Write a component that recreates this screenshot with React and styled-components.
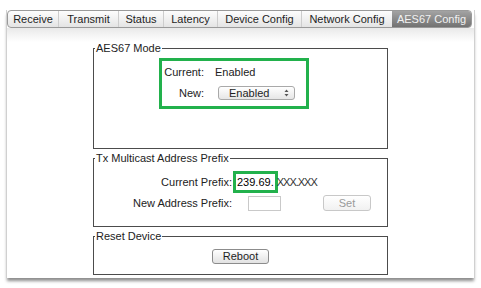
import React from 'react';
import styled, { createGlobalStyle } from 'styled-components';

const Global = createGlobalStyle`
  html, body { margin: 0; padding: 0; background: #fff; }
  body {
    font-family: "Liberation Sans", Arial, sans-serif;
    font-size: 11px;
    color: #222;
  }
`;

const Page = styled.div`
  width: 481px;
  height: 288px;
  box-sizing: border-box;
  padding: 10px 6px 0 6px;
`;

const Frame = styled.div`
  height: 268px;
  box-sizing: border-box;
  border-left: 1px solid #d0d0d0;
  border-right: 1px solid #d0d0d0;
  background: #fff;
  box-shadow: 0 4px 3px -1px rgba(0, 0, 0, 0.45);
  display: flex;
  flex-direction: column;
`;

const TabBar = styled.div`
  display: flex;
  height: 18px;
  box-sizing: border-box;
  margin-right: 2px;
  border: 1px solid #9a9a9a;
  border-radius: 4px;
  background: linear-gradient(#fdfdfd, #e4e4e4);
  overflow: hidden;
`;

const Tab = styled.div`
  width: ${(p) => p.$w}px;
  box-sizing: border-box;
  text-align: center;
  line-height: 16px;
  font-size: 11px;
  white-space: nowrap;
  color: ${(p) => (p.$active ? '#f2f2f2' : '#1e1e1e')};
  border-left: ${(p) => (p.$first || p.$active ? 'none' : '1px solid #cdcdcd')};
  background: ${(p) => (p.$active ? 'linear-gradient(#a3a3a3, #727272)' : 'transparent')};
`;

const Body = styled.div`
  flex: 1;
  display: flex;
  flex-direction: column;
  align-items: center;
  gap: 3px;
  padding-top: 14px;
  background: linear-gradient(#e9e9e9, #fff 14px);
`;

const Group = styled.fieldset`
  width: 295px;
  box-sizing: border-box;
  margin: 0;
  padding: 0;
  min-width: 0;
  border: 1px solid #4c4c4c;
`;

const Legend = styled.legend`
  margin-left: 1px;
  padding: 0 1px;
  line-height: 12px;
  font-size: 11px;
  color: #222;
`;

const GroupBody = styled.div`
  height: ${(p) => p.$h}px;
  box-sizing: border-box;
  padding-top: 7px;
  display: flex;
  flex-direction: column;
  align-items: ${(p) => (p.$center ? 'center' : 'stretch')};
`;

const ModeBox = styled.div`
  margin: -3px 0 0 65px;
  width: 150px;
  height: 51px;
  box-sizing: border-box;
  border: 3px solid #22b14c;
  padding: 4px 0 0 5px;
  display: grid;
  grid-template-columns: 37px auto;
  grid-template-rows: 14px 14px;
  column-gap: 11px;
  row-gap: 7px;
  align-items: center;
`;

const Label = styled.span`
  justify-self: end;
  white-space: nowrap;
  color: #222;
`;

const Value = styled.span`
  color: #222;
`;

const Select = styled.div`
  margin-left: 3px;
  width: 77px;
  height: 14px;
  box-sizing: border-box;
  border: 1px solid #a9a9a9;
  border-radius: 3px;
  background: linear-gradient(#ffffff, #e6e6e6);
  display: flex;
  align-items: center;
  justify-content: space-between;
  padding: 0 5px 0 10px;
  line-height: 12px;
  color: #1e1e1e;
`;

const PrefixGrid = styled.div`
  display: grid;
  grid-template-columns: 138px auto;
  grid-template-rows: 22px 16px;
  column-gap: 1px;
  row-gap: 2px;
  align-items: center;
`;

const ValueRow = styled.div`
  display: flex;
  align-items: center;
`;

const Mark = styled.span`
  height: 22px;
  box-sizing: border-box;
  border: 3px solid #22b14c;
  padding: 0 1px;
  line-height: 16px;
  color: #000;
  font-size: 11px;
`;

const Rest = styled.span`
  color: #333;
  letter-spacing: -1px;
  margin-left: -1px;
`;

const TextInput = styled.div`
  margin-left: 15px;
  width: 33px;
  height: 15px;
  box-sizing: border-box;
  border: 1px solid #c9c9c9;
  background: #fff;
`;

const Button = styled.div`
  margin-left: ${(p) => p.$ml || 0}px;
  width: ${(p) => p.$w}px;
  height: ${(p) => p.$h}px;
  box-sizing: border-box;
  border: 1px solid ${(p) => (p.$disabled ? '#c8c8c8' : '#8c8c8c')};
  border-radius: 3px;
  background: ${(p) => (p.$disabled ? 'linear-gradient(#ffffff, #f1f1f1)' : 'linear-gradient(#ffffff, #e2e2e2)')};
  color: ${(p) => (p.$disabled ? '#9a9a9a' : '#1e1e1e')};
  text-align: center;
  line-height: ${(p) => p.$h - 2}px;
`;

const tabs = [
  ['Receive', 50],
  ['Transmit', 60],
  ['Status', 45],
  ['Latency', 54],
  ['Device Config', 84],
  ['Network Config', 91],
  ['AES67 Config', 79],
];

const Arrows = () => (
  <svg width="5" height="8" viewBox="0 0 5 8">
    <path d="M2.5 0.5 L4.5 3 L0.5 3 Z" fill="#555" />
    <path d="M2.5 7.5 L4.5 5 L0.5 5 Z" fill="#555" />
  </svg>
);

export default function App() {
  return (
    <>
      <Global />
      <Page>
        <Frame>
          <TabBar>
            {tabs.map(([t, w], i) => (
              <Tab key={t} $w={w} $first={i === 0} $active={i === tabs.length - 1}>
                {t}
              </Tab>
            ))}
          </TabBar>
          <Body>
            <Group>
              <Legend>AES67 Mode</Legend>
              <GroupBody $h={94}>
                <ModeBox>
                  <Label>Current:</Label>
                  <Value>Enabled</Value>
                  <Label>New:</Label>
                  <Select>
                    <span>Enabled</span>
                    <Arrows />
                  </Select>
                </ModeBox>
              </GroupBody>
            </Group>
            <Group>
              <Legend>Tx Multicast Address Prefix</Legend>
              <GroupBody $h={62}>
                <PrefixGrid>
                  <Label>Current Prefix:</Label>
                  <ValueRow>
                    <Mark>239.69.</Mark>
                    <Rest>XXX.XXX</Rest>
                  </ValueRow>
                  <Label>New Address Prefix:</Label>
                  <ValueRow>
                    <TextInput />
                    <Button $disabled $ml={42} $w={48} $h={16}>Set</Button>
                  </ValueRow>
                </PrefixGrid>
              </GroupBody>
            </Group>
            <Group>
              <Legend>Reset Device</Legend>
              <GroupBody $h={32} $center>
                <Button $w={57} $h={15}>Reboot</Button>
              </GroupBody>
            </Group>
          </Body>
        </Frame>
      </Page>
    </>
  );
}
